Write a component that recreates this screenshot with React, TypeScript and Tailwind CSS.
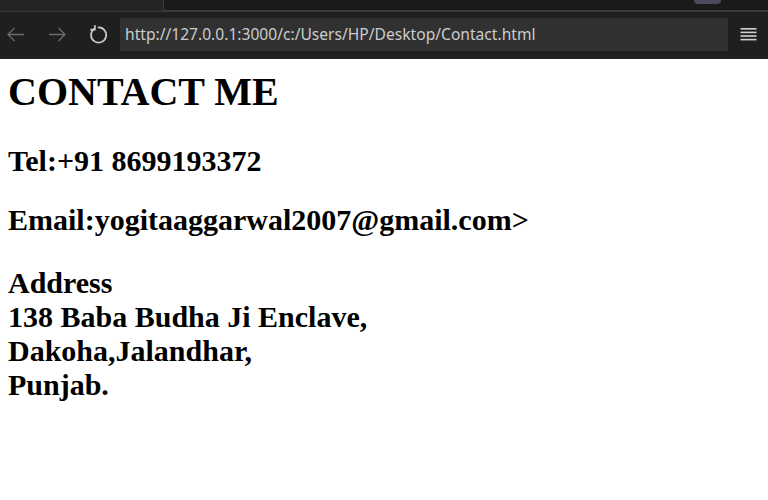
import { useState } from 'react';

const URL = 'http://127.0.0.1:3000/c:/Users/HP/Desktop/Contact.html';

function BackIcon({ className }: { className?: string }) {
  return (
    <svg width="18" height="15" viewBox="0 0 18 15" fill="none" className={className}>
      <path d="M17 7.5H1.5M7.5 1L1 7.5L7.5 14" stroke="currentColor" strokeWidth="1.3" />
    </svg>
  );
}

function ForwardIcon({ className }: { className?: string }) {
  return (
    <svg width="18" height="15" viewBox="0 0 18 15" fill="none" className={className}>
      <path d="M1 7.5H16.5M10.5 1L17 7.5L10.5 14" stroke="currentColor" strokeWidth="1.3" />
    </svg>
  );
}

function ReloadIcon() {
  return (
    <svg width="19" height="20" viewBox="0 0 18 19" fill="none" className="text-[#cccccc]">
      {/* open circle with a hook at the top left */}
      <path
        d="M5 3.6A7.2 7.2 0 1 0 9 2.3"
        stroke="currentColor"
        strokeWidth="1.6"
        strokeLinecap="round"
      />
      <path d="M5.6 0.8V4.4H1.9" stroke="currentColor" strokeWidth="1.6" strokeLinecap="round" strokeLinejoin="round" />
    </svg>
  );
}

function MenuIcon() {
  return (
    <svg width="17" height="13" viewBox="0 0 17 13" className="text-[#d0d0d0]">
      <rect x="0.5" y="0" width="16" height="1.6" fill="currentColor" />
      <rect x="0.5" y="3.6" width="16" height="1.6" fill="currentColor" />
      <rect x="0.5" y="7.2" width="16" height="1.6" fill="currentColor" />
      <rect x="0.5" y="10.8" width="16" height="1.6" fill="currentColor" />
    </svg>
  );
}

function BrowserBar() {
  const [url] = useState(URL);
  return (
    <div className="bg-[#1f1f1f]">
      {/* tab strip, cut off at the top */}
      <div className="flex h-[12px] bg-[#252525] border-b border-[#3a3a3a]">
        <div className="w-[163px]" />
        <div className="flex flex-1 justify-end border-l border-b border-[#3c3c3c] bg-[#1a1a1a] pr-[47px]">
          <div className="h-[4px] w-[27px] rounded-b-md bg-[#4b4b5e]" />
        </div>
      </div>

      {/* navigation row */}
      <div className="flex h-[47px] items-start pt-[6px]">
        <div className="flex h-[33px] w-[120px] items-center">
          <BackIcon className="ml-[7px] text-[#6b6b6b]" />
          <ForwardIcon className="ml-[23px] text-[#6b6b6b]" />
          <div className="ml-[23px] mt-[1px]">
            <ReloadIcon />
          </div>
        </div>
        <div className="flex h-[33px] w-[608px] items-center bg-[#313131] pl-[5px]">
          <span className="font-['Noto_Sans',sans-serif] text-[15.6px] text-[#cccccc] whitespace-nowrap">
            {url}
          </span>
        </div>
        <div className="flex h-[33px] flex-1 items-center justify-center pl-[1px]">
          <MenuIcon />
        </div>
      </div>
    </div>
  );
}

export default function App() {
  return (
    <div className="min-h-[500px] bg-white">
      <BrowserBar />
      <main className="px-[8px] pt-[10px] font-['Liberation_Serif',serif] font-bold text-black">
        <h1 className="text-[40px] leading-[46px]">CONTACT ME</h1>
        <h2 className="mt-[29px] text-[30px] leading-[34px]">Tel:+91 8699193372</h2>
        <h2 className="mt-[25px] text-[30px] leading-[34px]">Email:yogitaaggarwal2007@gmail.com&gt;</h2>
        <h2 className="mt-[29px] text-[30px] leading-[34px]">
          Address
          <br />
          138 Baba Budha Ji Enclave,
          <br />
          Dakoha,Jalandhar,
          <br />
          Punjab.
        </h2>
      </main>
    </div>
  );
}
